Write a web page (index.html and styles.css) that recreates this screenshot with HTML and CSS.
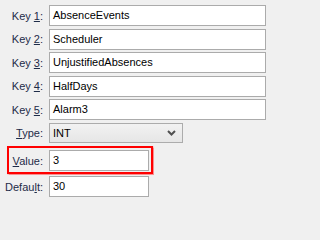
FILE: index.html
```html
<!DOCTYPE html>
<html>
<head>
<meta charset="utf-8">
<link rel="stylesheet" href="styles.css">
</head>
<body>
<div class="form">
  <div class="row"><label class="lbl">Key <u>1</u>:</label><div class="field wide">AbsenceEvents</div></div>
  <div class="row"><label class="lbl">Key <u>2</u>:</label><div class="field wide">Scheduler</div></div>
  <div class="row"><label class="lbl">Key <u>3</u>:</label><div class="field wide">UnjustifiedAbsences</div></div>
  <div class="row"><label class="lbl">Key <u>4</u>:</label><div class="field wide">HalfDays</div></div>
  <div class="row"><label class="lbl">Key <u>5</u>:</label><div class="field wide">Alarm3</div></div>
  <div class="row sel-row"><label class="lbl"><u>T</u>ype:</label>
    <div class="select"><span>INT</span>
      <svg class="chev" width="9" height="6" viewBox="0 0 9 6"><polyline points="1,1 4.5,4.5 8,1" fill="none" stroke="#505050" stroke-width="2"/></svg>
    </div>
  </div>
  <div class="highlight">
    <div class="row"><label class="lbl lbl-in"><u>V</u>alue:</label><div class="field short">3</div></div>
  </div>
  <div class="row last"><label class="lbl">Defau<u>l</u>t:</label><div class="field short">30</div></div>
</div>
</body>
</html>
```
FILE: styles.css
```css
html, body {
  margin: 0;
  padding: 0;
  background: #f0f0f0;
}
body {
  width: 271px;
  height: 202px;
  overflow: hidden;
  font-family: "Liberation Sans", Arial, sans-serif;
  font-size: 11px;
}
.form {
  display: flex;
  flex-direction: column;
  gap: 2.5px;
  padding-top: 5px;
}
.row {
  display: flex;
  align-items: center;
  gap: 6px;
}
.lbl {
  width: 43px;
  text-align: right;
  color: #1e2b48;
  white-space: nowrap;
}
.lbl u {
  text-decoration-thickness: 1px;
  text-underline-offset: 1px;
}
.lbl-in {
  width: 34px;
}
.field {
  box-sizing: border-box;
  height: 21px;
  border: 1px solid #ababab;
  background: #fff;
  color: #000;
  padding: 0 3px;
  line-height: 19px;
  white-space: nowrap;
  overflow: hidden;
}
.wide {
  width: 217px;
}
.short {
  width: 100px;
}
.sel-row {
  margin-top: 0.5px;
}
.select {
  box-sizing: border-box;
  width: 134px;
  height: 20px;
  border: 1px solid #acacac;
  background: linear-gradient(#f2f2f2, #e6e6e6);
  display: flex;
  align-items: center;
  justify-content: space-between;
  padding: 0 6px 0 3px;
  color: #000;
}
.chev {
  display: block;
}
.highlight {
  margin-left: 7px;
  width: 146px;
  box-sizing: border-box;
  border: 2px solid #ff0000;
  box-shadow: 0 0 1px 0.5px rgba(255, 80, 80, 0.6);
  padding: 2px 2px 1px 0;
  margin-top: 0.5px;
}
.last {
  margin-top: -0.5px;
}
```
